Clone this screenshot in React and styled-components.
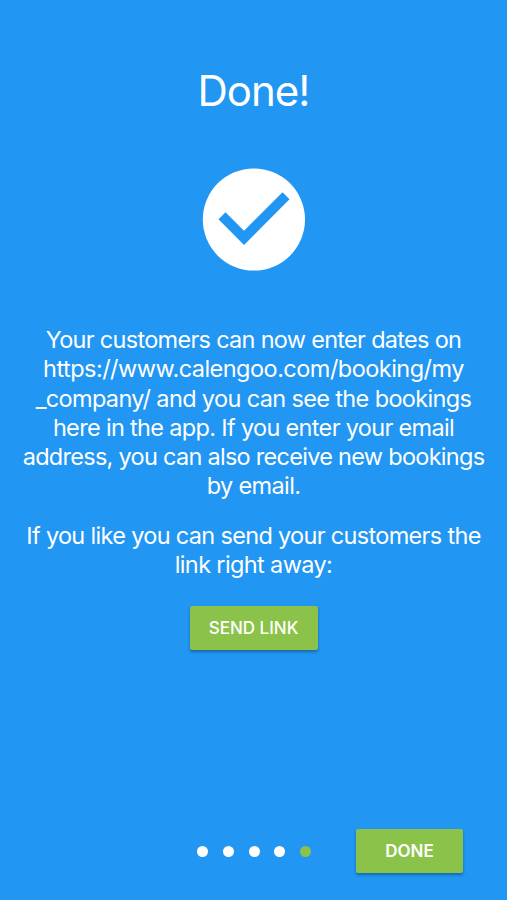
import React from "react";
import styled, { createGlobalStyle } from "styled-components";

const GlobalStyle = createGlobalStyle`
  * {
    box-sizing: border-box;
  }

  body {
    margin: 0;
    background: #2196f3;
    font-family: Inter, "Liberation Sans", sans-serif;
  }
`;

const Screen = styled.div`
  height: 900px;
  display: flex;
  flex-direction: column;
  align-items: center;
  color: #fff;
  background: #2196f3;
  overflow: hidden;
`;

const Title = styled.h1`
  margin: 64px 0 50px;
  font-size: 42px;
  line-height: 54px;
  font-weight: 400;
  letter-spacing: -1px;
`;

const CheckCircle = styled.svg`
  display: block;
  width: 103px;
  height: 103px;
  margin-bottom: 54px;
`;

const Line = styled.span`
  display: block;
  white-space: nowrap;
  letter-spacing: ${props => props.$spacing}px;
`;

const Text = styled.p`
  margin: 0 0 20px;
  font-size: 23.5px;
  line-height: 29.3px;
  text-align: center;
`;

const Button = styled.button`
  width: ${props => props.$width}px;
  height: 44px;
  padding: 0 0 1px;
  border: 0;
  border-radius: 2px;
  color: #fff;
  background: #8bc34a;
  box-shadow: 0 2px 3px rgba(0, 0, 0, 0.3);
  font-family: Inter, "Liberation Sans", sans-serif;
  font-size: 17px;
  font-weight: ${props => props.$weight || 500};
`;

const SendLink = styled.div`
  margin-top: 7px;
`;

const Footer = styled.footer`
  width: 100%;
  display: grid;
  grid-template-columns: 1fr auto 1fr;
  align-items: center;
  margin-top: auto;
  padding: 0 44px 27px;
`;

const Dots = styled.div`
  grid-column: 2;
  display: flex;
  gap: 14.7px;
  padding-left: 1px;
`;

const Dot = styled.span`
  width: 11px;
  height: 11px;
  border-radius: 50%;
  background: ${props => (props.$active ? "#8bc34a" : "#fff")};
`;

const Actions = styled.div`
  justify-self: end;
`;

const message = [
  { text: "Your customers can now enter dates on", spacing: -0.71 },
  { text: "https://www.calengoo.com/booking/my", spacing: -0.53 },
  { text: "_company/ and you can see the bookings", spacing: -0.64 },
  { text: "here in the app. If you enter your email", spacing: -0.67 },
  { text: "address, you can also receive new bookings", spacing: -0.72 },
  { text: "by email.", spacing: -0.64 }
];

const linkMessage = [
  { text: "If you like you can send your customers the", spacing: -0.68 },
  { text: "link right away:", spacing: -0.63 }
];

const Paragraph = props => {
  return (
    <Text>
      {props.lines.map(line => (
        <Line key={line.text} $spacing={line.spacing}>
          {line.text}
        </Line>
      ))}
    </Text>
  );
};

const App = () => {
  return (
    <Screen>
      <GlobalStyle />
      <Title>Done!</Title>
      <CheckCircle viewBox="0 0 103 103" aria-hidden="true">
        <circle cx="51.9" cy="51.5" r="51.1" fill="#fff" />
        <path
          d="M16.5 51.3L23.5 44.3L42 62.7L80.5 24.2L87.5 31.2L42 77Z"
          fill="#2196f3"
        />
      </CheckCircle>
      <Paragraph lines={message} />
      <Paragraph lines={linkMessage} />
      <SendLink>
        <Button $width={128}>SEND LINK</Button>
      </SendLink>
      <Footer>
        <Dots>
          {[1, 2, 3, 4, 5].map(step => (
            <Dot key={step} $active={step === 5} />
          ))}
        </Dots>
        <Actions>
          <Button $width={107} $weight={600}>
            DONE
          </Button>
        </Actions>
      </Footer>
    </Screen>
  );
};

export default App;
